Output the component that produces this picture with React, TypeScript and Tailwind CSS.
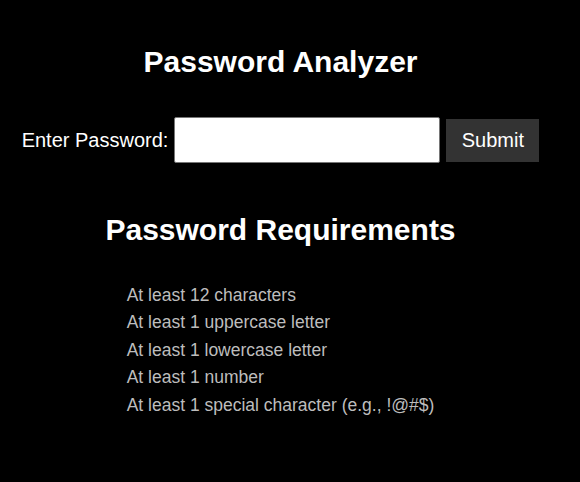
import React from "react";

export default function App() {
  const reqs = [
    "At least 12 characters",
    "At least 1 uppercase letter",
    "At least 1 lowercase letter",
    "At least 1 number",
    "At least 1 special character (e.g., !@#$)",
  ];
  return (
    <div
      className="min-h-[482px] w-full bg-black text-white"
      style={{ fontFamily: '"Liberation Sans", Arial, sans-serif' }}
    >
      <div className="flex w-[561px] flex-col items-center pt-[44px]">
        <h1 className="text-[30px] font-bold leading-[36px]">Password Analyzer</h1>
        <form
          className="mt-[37px] flex items-center"
          onSubmit={(e) => e.preventDefault()}
        >
          <label className="text-[20px] leading-[24px]">Enter Password:</label>
          <input
            type="password"
            className="ml-[6px] h-[46px] w-[266px] rounded-[2px] border border-[#767676] bg-white px-2 text-black outline-none"
          />
          <button
            type="submit"
            className="ml-[6px] h-[43px] w-[93px] bg-[#333333] text-[20px] text-white"
          >
            Submit
          </button>
        </form>
        <h2 className="mt-[49px] text-[30px] font-bold leading-[36px]">
          Password Requirements
        </h2>
        <ul className="mt-[34px] text-left text-[17.5px] leading-[27.4px] text-[#bdbdbd]">
          {reqs.map((r) => (
            <li key={r}>{r}</li>
          ))}
        </ul>
      </div>
    </div>
  );
}
